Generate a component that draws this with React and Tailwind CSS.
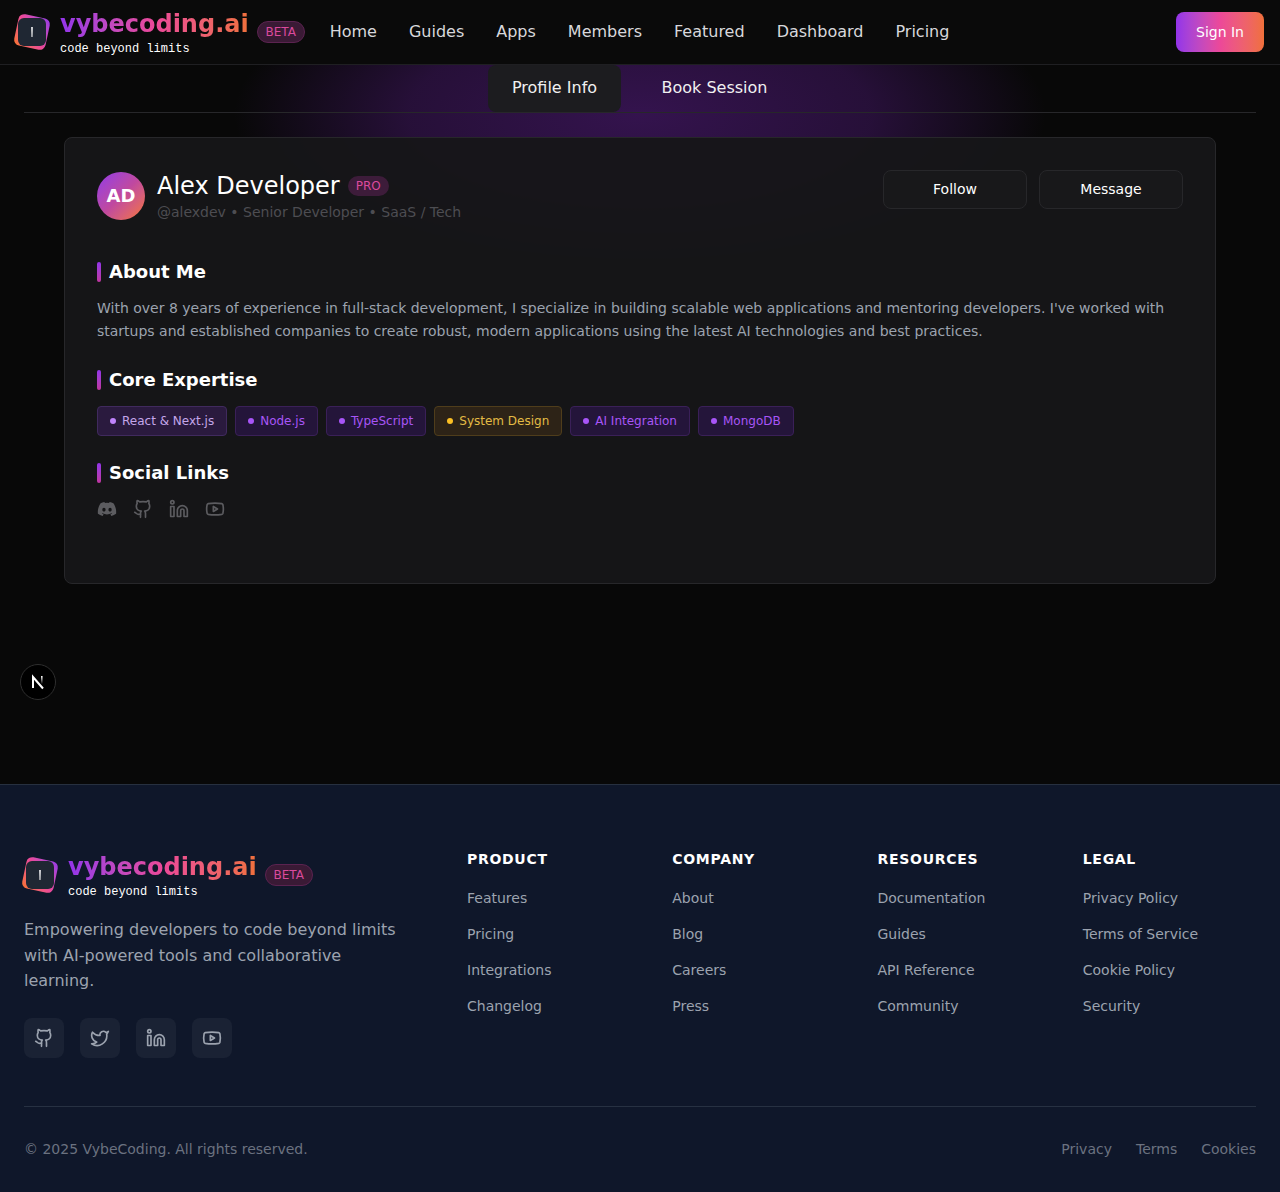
import React from 'react';
import { Github, Twitter, Linkedin, Youtube } from 'lucide-react';
import { FaDiscord } from 'react-icons/fa';

const NAV_LINKS = ['Home', 'Guides', 'Apps', 'Members', 'Featured', 'Dashboard', 'Pricing'];

const PURPLE_TAG = 'bg-[#24153a] border-[#3a2058] text-[#a855f7]';

const SKILLS = [
  { label: 'React & Next.js', box: 'bg-[#2a1a3e] border-[#402a5e] text-[#c4a6ea]', dot: 'bg-[#c084fc]' },
  { label: 'Node.js', box: PURPLE_TAG, dot: 'bg-[#a855f7]' },
  { label: 'TypeScript', box: PURPLE_TAG, dot: 'bg-[#a855f7]' },
  { label: 'System Design', box: 'bg-[#2d2317] border-[#4f3d1b] text-[#e3bb45]', dot: 'bg-[#fbbf24]' },
  { label: 'AI Integration', box: PURPLE_TAG, dot: 'bg-[#a855f7]' },
  { label: 'MongoDB', box: PURPLE_TAG, dot: 'bg-[#a855f7]' },
];

const FOOTER_COLUMNS = [
  { title: 'PRODUCT', links: ['Features', 'Pricing', 'Integrations', 'Changelog'] },
  { title: 'COMPANY', links: ['About', 'Blog', 'Careers', 'Press'] },
  { title: 'RESOURCES', links: ['Documentation', 'Guides', 'API Reference', 'Community'] },
  { title: 'LEGAL', links: ['Privacy Policy', 'Terms of Service', 'Cookie Policy', 'Security'] },
];

const Logo = () => (
  <div className="flex items-center gap-2.5">
    <div className="relative w-9 h-9 shrink-0">
      <div className="absolute left-[2px] top-[2px] w-8 h-8 rounded-md rotate-12 bg-gradient-to-tr from-[#f97316] via-[#ec4899] to-[#9333ea]"></div>
      <div className="absolute left-[4px] top-[4px] w-[28px] h-[28px] rounded-md bg-[#1f2733] flex items-center justify-center">
        <svg width="4" height="12" viewBox="0 0 4 12">
          <path d="M1.2 1 L2.8 1 L2.5 11 L1.5 11 Z" fill="#fff" />
        </svg>
      </div>
    </div>
    <div>
      <div className="mt-[1px] text-2xl font-bold leading-8 bg-gradient-to-r from-[#9333ea] via-[#ec4899] to-[#f0703a] bg-clip-text text-transparent">
        vybecoding.ai
      </div>
      <div className="mt-[1px] text-xs leading-4 text-white font-['Liberation_Mono',monospace]">code beyond limits</div>
    </div>
    <span className="ml-[-2px] w-12 h-[22px] flex items-center justify-center rounded-full border border-[#5b2350] bg-[#3a1a35] text-xs text-[#db4a9d]">
      BETA
    </span>
  </div>
);

const SectionTitle = ({ children }) => (
  <h2 className="flex items-center gap-2 text-lg font-bold leading-7 text-white">
    <span className="w-1 h-5 rounded-full bg-gradient-to-b from-[#9333ea] to-[#c0359f]"></span>
    {children}
  </h2>
);

const Header = () => (
  <header className="relative z-10 h-[65px] border-b border-[#1f1f22] bg-[#0a0a0a] flex items-center pl-[14px] pr-4">
    <Logo />
    <nav className="ml-[25px] flex items-center gap-8">
      {NAV_LINKS.map((link) => (
        <a key={link} href="#" className="text-base text-[#d8d8dc]">
          {link}
        </a>
      ))}
    </nav>
    <button className="ml-auto w-[88px] h-10 rounded-lg text-sm font-medium text-white bg-gradient-to-r from-[#9333ea] via-[#ec4899] to-[#f0703a]">
      Sign In
    </button>
  </header>
);

const ProfileCard = () => (
  <div className="mx-16 mt-6 rounded-lg border border-[#27272a] bg-[#161618]/95 p-8 pb-16 relative">
    <div className="flex items-start justify-between">
      <div className="flex items-start gap-3 mt-[2px]">
        <div className="w-12 h-12 rounded-full flex items-center justify-center text-lg font-bold text-white bg-gradient-to-br from-[#9333ea] via-[#c0489f] to-[#f97316]">
          AD
        </div>
        <div>
          <div className="flex items-center gap-2">
            <span className="text-2xl leading-7 text-white">Alex Developer</span>
            <span className="px-2 h-5 flex items-center rounded-full bg-[#3d1c3a] text-xs text-[#db4a9d]">PRO</span>
          </div>
          <p className="mt-[2px] text-sm leading-5 text-[#4d4d52]">@alexdev • Senior Developer • SaaS / Tech</p>
        </div>
      </div>
      <div className="flex gap-3">
        <button className="w-36 h-[39px] pb-[1px] rounded-lg border border-[#27272a] bg-[#18181a] text-sm text-white">Follow</button>
        <button className="w-36 h-[39px] pb-[1px] rounded-lg border border-[#27272a] bg-[#18181a] text-sm text-white">Message</button>
      </div>
    </div>

    <div className="mt-9">
      <SectionTitle>About Me</SectionTitle>
      <p className="mt-[11px] text-sm leading-[23px] text-[#9ca3af]">
        With over 8 years of experience in full-stack development, I specialize in building scalable web applications and mentoring developers. I've worked with startups and established companies to create robust, modern applications using the latest AI technologies and best practices.
      </p>
    </div>

    <div className="mt-[23px]">
      <SectionTitle>Core Expertise</SectionTitle>
      <div className="mt-3 flex gap-2">
        {SKILLS.map((skill) => (
          <span key={skill.label} className={`h-[30px] px-3 flex items-center gap-[6px] rounded border text-xs ${skill.box}`}>
            <span className={`w-[6px] h-[6px] rounded-full ${skill.dot}`}></span>
            {skill.label}
          </span>
        ))}
      </div>
    </div>

    <div className="mt-[23px]">
      <SectionTitle>Social Links</SectionTitle>
      <div className="mt-3 flex gap-4 text-[#5c5c60]">
        <FaDiscord size={20} />
        <Github size={20} />
        <Linkedin size={20} />
        <Youtube size={20} />
      </div>
    </div>
  </div>
);

const Footer = () => (
  <footer className="h-[408px] border-t border-[#27303f] bg-[#0f172a] px-6 pt-16">
    <div className="grid grid-cols-[411px_repeat(4,1fr)] gap-8 h-[258px] border-b border-[#273142]">
      <div>
        <div className="mt-[1px] ml-[-2px]">
          <Logo />
        </div>
        <p className="mt-[17px] max-w-sm text-base leading-[25.6px] text-[#9ca3af]">
          Empowering developers to code beyond limits with AI-powered tools and collaborative learning.
        </p>
        <div className="mt-6 flex gap-4">
          {[Github, Twitter, Linkedin, Youtube].map((Icon, i) => (
            <a key={i} href="#" className="w-10 h-10 rounded-lg bg-[#1a2234] flex items-center justify-center text-[#9ca3af]">
              <Icon size={20} />
            </a>
          ))}
        </div>
      </div>
      {FOOTER_COLUMNS.map((col) => (
        <div key={col.title}>
          <h3 className="text-sm font-bold tracking-wider text-white">{col.title}</h3>
          <ul className="mt-[19px] flex flex-col gap-4">
            {col.links.map((link) => (
              <li key={link} className="text-sm leading-5 text-[#9ca3af]">{link}</li>
            ))}
          </ul>
        </div>
      ))}
    </div>
    <div className="mt-8 flex items-center justify-between text-sm text-[#6b7280]">
      <span>© 2025 VybeCoding. All rights reserved.</span>
      <div className="flex gap-6">
        <a href="#">Privacy</a>
        <a href="#">Terms</a>
        <a href="#">Cookies</a>
      </div>
    </div>
  </footer>
);

export default function App() {
  return (
    <div className="min-h-screen bg-[#0a0a0a] font-['DejaVu_Sans',sans-serif]">
      <Header />
      <main className="relative h-[719px] overflow-hidden bg-[#080808]">
        {/* purple glow behind the tabs */}
        <div className="absolute left-[230px] top-[-110px] w-[820px] h-[320px] bg-[radial-gradient(ellipse_at_center,rgba(88,28,135,0.55),rgba(88,28,135,0.38)_40%,rgba(88,28,135,0)_70%)]"></div>
        <div className="relative">
          <div className="mx-6 h-12 border-b border-[#27272a] flex justify-center gap-4">
            <button className="w-[133px] pb-[2px] rounded-lg bg-[#1c1c1f] text-base text-[#f0f0f0]">Profile Info</button>
            <button className="w-[155px] pb-[2px] text-base text-[#f0f0f0]">Book Session</button>
          </div>
          <ProfileCard />
        </div>
        {/* dev tools badge */}
        <div className="absolute left-5 top-[599px] w-9 h-9 rounded-full bg-black border border-[#2e2e2e] flex items-center justify-center">
          <svg width="16" height="16" viewBox="0 0 16 16" fill="none">
            <defs>
              <linearGradient id="nextFade" x1="0" y1="0" x2="0" y2="1">
                <stop offset="0" stopColor="#fff" />
                <stop offset="1" stopColor="#fff" stopOpacity="0" />
              </linearGradient>
            </defs>
            <path d="M3 14 V3 L13 14.5" stroke="#fff" strokeWidth="2" />
            <rect x="11" y="2" width="1.6" height="8" fill="url(#nextFade)" />
          </svg>
        </div>
      </main>
      <Footer />
    </div>
  );
}
